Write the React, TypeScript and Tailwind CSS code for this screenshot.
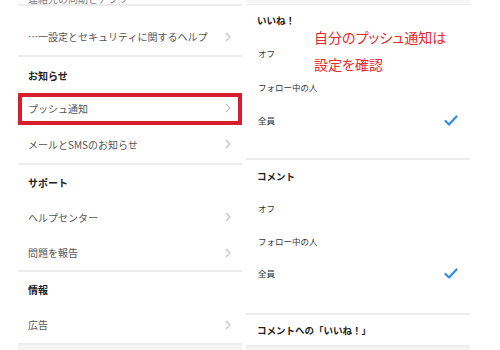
import React from "react";

const font = { fontFamily: '"Noto Sans CJK JP", "Noto Sans", sans-serif' };

function Chevron() {
  return (
    <svg width="6" height="10" viewBox="0 0 6 10" className="shrink-0">
      <polyline points="1,1 5,5 1,9" fill="none" stroke="#c2c2c2" strokeWidth="1.2" />
    </svg>
  );
}

function Check() {
  return (
    <svg width="14" height="11" viewBox="0 0 14 11" className="shrink-0">
      <polyline points="1.5,6 5,9.5 12.5,1.5" fill="none" stroke="#2e8fe0" strokeWidth="2.2" strokeLinecap="round" strokeLinejoin="round" />
    </svg>
  );
}

function Line() {
  return <div className="h-[2px] bg-[#ededed]" />;
}

function LinkRow({ label, h }: { label: string; h: string }) {
  return (
    <div className={`flex items-center justify-between pl-[10px] pr-[11px] ${h}`}>
      <span className="text-[10px] text-[#555]">{label}</span>
      <Chevron />
    </div>
  );
}

function Heading({ label, h }: { label: string; h: string }) {
  return (
    <div className={`flex items-center pl-[10px] ${h}`}>
      <span className="text-[10px] font-bold text-[#222]">{label}</span>
    </div>
  );
}

function Option({ label, h, checked }: { label: string; h: string; checked?: boolean }) {
  return (
    <div className={`flex items-center justify-between pl-[12px] pr-[12px] ${h}`}>
      <span className="text-[8.5px] text-[#333]">{label}</span>
      {checked && <Check />}
    </div>
  );
}

function RightHeading({ label, h }: { label: string; h: string }) {
  return (
    <div className={`flex items-center pl-[11px] ${h}`}>
      <span className="text-[9.5px] font-bold text-[#222]">{label}</span>
    </div>
  );
}

export default function App() {
  return (
    <div className="w-[500px] h-[350px] overflow-hidden bg-white relative" style={font}>
      <div className="flex gap-[4px] pl-[18px]">
        {/* left: settings list */}
        <div className="w-[224px] flex flex-col">
          <div className="h-[4px] overflow-hidden pl-[10px]">
            <div className="-mt-[7px] text-[10px] leading-[12px] text-[#777]">連絡先の同期とアプリ</div>
          </div>
          <Line />
          <div className="h-[49px] flex items-center justify-between pl-[10px] pr-[11px] pt-[12px]">
            <span className="text-[10px] text-[#555]">…一設定とセキュリティに関するヘルプ</span>
            <Chevron />
          </div>
          <Line />
          <Heading label="お知らせ" h="h-[36px]" />
          <div className="h-[32px] border-[4px] border-[#d81e2c] flex items-center justify-between pl-[6px] pr-[7px] pb-[2px]">
            <span className="text-[10px] text-[#555]">プッシュ通知</span>
            <Chevron />
          </div>
          <LinkRow label="メールとSMSのお知らせ" h="h-[38px]" />
          <Line />
          <Heading label="サポート" h="h-[34px]" />
          <LinkRow label="ヘルプセンター" h="h-[36px]" />
          <LinkRow label="問題を報告" h="h-[35px]" />
          <Line />
          <Heading label="情報" h="h-[34px]" />
          <LinkRow label="広告" h="h-[37px]" />
          <Line />
          <div className="h-[8px] bg-[#f4f4f4]" />
        </div>

        {/* right: push notification options */}
        <div className="w-[224px] flex flex-col">
          <div className="h-[4px] bg-[#f6f6f6]" />
          <div className="h-[1px] bg-[#ececec]" />
          <RightHeading label="いいね！" h="h-[31px]" />
          <Option label="オフ" h="h-[34px]" />
          <Option label="フォロー中の人" h="h-[34px]" />
          <Option label="全員" h="h-[32px]" checked />
          <div className="h-[22px]" />
          <Line />
          <RightHeading label="コメント" h="h-[32px]" />
          <Option label="オフ" h="h-[32px]" />
          <Option label="フォロー中の人" h="h-[34px]" />
          <Option label="全員" h="h-[30px]" checked />
          <div className="h-[25px]" />
          <Line />
          <RightHeading label="コメントへの「いいね！」" h="h-[30px]" />
          <Line />
          <div className="h-[8px] bg-[#f4f4f4]" />
        </div>
      </div>

      {/* red annotation */}
      <div className="absolute left-[314px] top-[24px] text-[14px] leading-[27px] text-[#e8282b] [font-feature-settings:'palt']">
        <div>自分のプッシュ通知は</div>
        <div>設定を確認</div>
      </div>
    </div>
  );
}
